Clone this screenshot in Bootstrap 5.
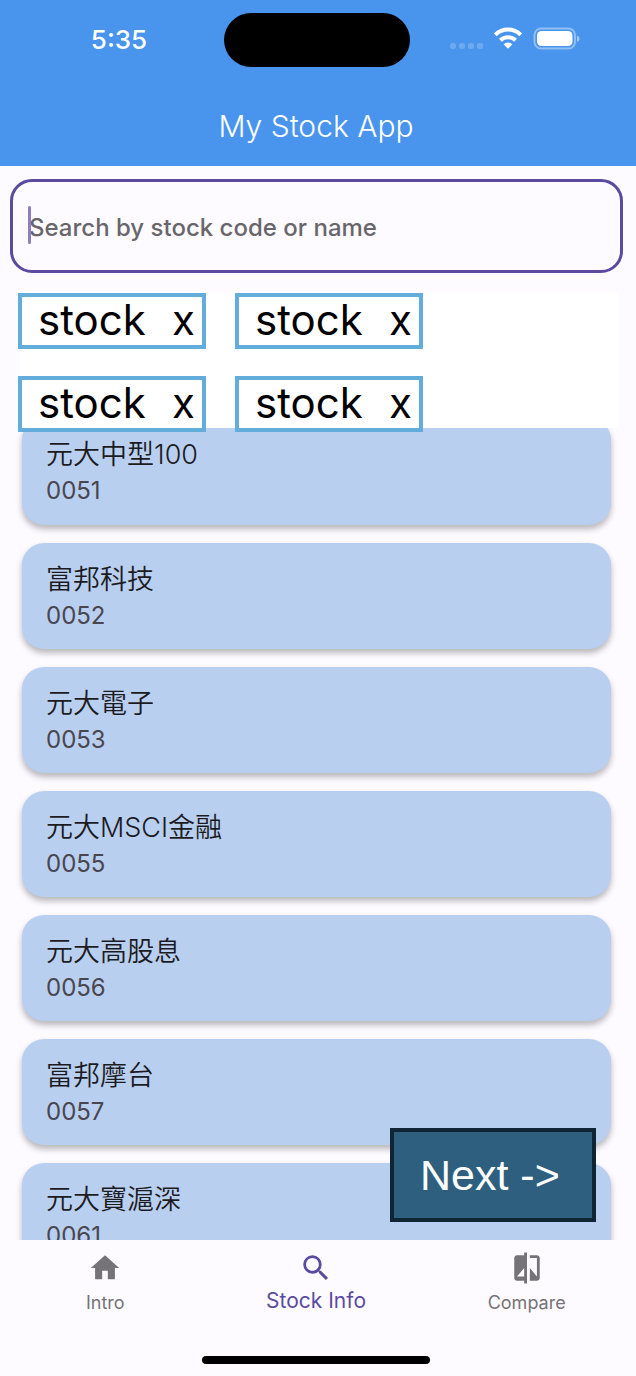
<!DOCTYPE html>
<html lang="zh-Hant">
<head>
<meta charset="utf-8">
<meta name="viewport" content="width=device-width, initial-scale=1">
<title>My Stock App</title>
<link href="https://cdn.jsdelivr.net/npm/bootstrap@5.3.0/dist/css/bootstrap.min.css" rel="stylesheet">
<style>
  body { font-family: Inter, "Noto Sans CJK TC", sans-serif; background: #fdfbff; color: #1c1b1f; }
  .app-header { background: #4994ec; padding-top: 13px; height: 166px; }
  .island { width: 186px; height: 54px; background: #000; }
  .clock { font-size: 26px; line-height: 54px; padding-left: 14px; }
  .status-icons { padding-right: 12px; }
  .app-title { font-size: 30px; line-height: 40px; margin-top: 39px; font-weight: 300; }
  .search-area { padding: 13px 13px 19px 10px; }
  .search-input { height: 94px; border: 3px solid #5b4a9f; border-radius: 22px; padding: 2px 16px 0; font-size: 24px; background: transparent; }
  .search-input:focus { border-color: #5b4a9f; box-shadow: none; background: transparent; }
  .search-input::placeholder { color: #68666b; opacity: 1; font-weight: 500; }
  .caret { left: 18px; top: 27px; width: 3px; height: 38px; border-radius: 2px; background: #8b7fc0; }
  .chip-panel { z-index: 2; height: 136px; margin: 0 18px 0 20px; background: #fff; }
  .chip-grid { display: grid; grid-template-columns: 188px 188px; gap: 27px 29px; margin-left: -2px; padding-top: 1px; }
  .chip { height: 56px; border: 4px solid #62addb; background: #fff; color: #000; font-size: 42px; line-height: 46px; padding: 0 7px 0 16px; }
  .list-area { margin-top: -10px; }
  .stock-list { padding: 0 25px 0 22px; gap: 18px; }
  .stock-item { height: 107px; border-radius: 22px; background: #b9cff0; padding: 17px 24px; box-shadow: 0 4px 6px rgba(0,0,0,.28); color: inherit; }
  .stock-list li + li .stock-item { height: 106px; }
  .stock-name { font-size: 27px; line-height: 40px; font-weight: 350; }
  .stock-code { font-size: 24px; line-height: 32px; color: #49464f; font-weight: 400; }
  .next-btn { right: 40px; bottom: 18px; width: 206px; height: 94px; border: 4px solid #0f2533; background: #2e5f7f; color: #fff; font-family: "Liberation Sans", Arial, sans-serif; font-size: 43px; padding: 0 26px; }
  .tab-bar { z-index: 3; background: #fdfbff; height: 136px; padding-right: 4px; }
  .tab-link { color: #757377; font-size: 18px; line-height: 24px; padding-top: 11px; gap: 6px; }
  .tab-link.active { color: #5b4a9f; font-size: 21px; gap: 4px; }
  .home-bar { width: 228px; height: 8px; background: #000; margin-bottom: 12px; }
</style>
</head>
<body>
<div class="d-flex flex-column vh-100 overflow-hidden">
  <header class="app-header text-white flex-shrink-0">
    <div class="d-flex align-items-center pe-1">
      <div class="clock col text-center fw-medium">5:35</div>
      <div class="island rounded-pill"></div>
      <div class="status-icons col d-flex justify-content-center">
        <svg width="130" height="30" viewBox="0 0 130 30" aria-label="Wi-Fi and battery status" role="img">
          <g fill="#fff" fill-opacity=".2"><rect x="0" y="18" width="6" height="6" rx="2"/><rect x="9" y="18" width="6" height="6" rx="2"/><rect x="18" y="18" width="6" height="6" rx="2"/><rect x="27" y="18" width="6" height="6" rx="2"/></g>
          <g fill="none" stroke="#fff" stroke-width="4"><path d="M45.300 9.800A18 18 0 0 1 70.700 9.800"/><path d="M50.400 15.300A11 11 0 0 1 65.600 15.300"/></g>
          <path fill="#fff" d="M53.500 19.200a6.500 6.500 0 0 1 9 0L58 23.800z"/>
          <rect x="84.500" y="3.500" width="40.500" height="20" rx="6.500" fill="none" stroke="#fff" stroke-opacity=".4" stroke-width="2"/>
          <rect x="87" y="6" width="35.500" height="15" rx="4.500" fill="#fff"/>
          <path d="M127 10.500q2.500 1 2.500 3.200t-2.500 3.200z" fill="#fff" fill-opacity=".5"/>
        </svg>
      </div>
    </div>
    <h1 class="app-title text-center mb-0 pe-1">My Stock App</h1>
  </header>

  <main class="flex-grow-1 d-flex flex-column overflow-hidden position-relative">
    <div class="search-area flex-shrink-0">
      <div class="position-relative">
        <input id="search" type="text" class="form-control search-input" placeholder="Search by stock code or name" aria-label="Search by stock code or name">
        <span class="caret position-absolute"></span>
      </div>
    </div>

    <section class="chip-panel position-relative flex-shrink-0">
      <div class="chip-grid">
        <button type="button" class="chip d-flex justify-content-between"><span>stock</span><span>x</span></button>
        <button type="button" class="chip d-flex justify-content-between"><span>stock</span><span>x</span></button>
        <button type="button" class="chip d-flex justify-content-between"><span>stock</span><span>x</span></button>
        <button type="button" class="chip d-flex justify-content-between"><span>stock</span><span>x</span></button>
      </div>
    </section>

    <div class="list-area flex-grow-1 overflow-hidden">
      <ul class="stock-list list-unstyled d-flex flex-column mb-0">
        <li><a href="#" class="stock-item d-block text-decoration-none"><div class="stock-name">元大中型100</div><div class="stock-code">0051</div></a></li>
        <li><a href="#" class="stock-item d-block text-decoration-none"><div class="stock-name">富邦科技</div><div class="stock-code">0052</div></a></li>
        <li><a href="#" class="stock-item d-block text-decoration-none"><div class="stock-name">元大電子</div><div class="stock-code">0053</div></a></li>
        <li><a href="#" class="stock-item d-block text-decoration-none"><div class="stock-name">元大MSCI金融</div><div class="stock-code">0055</div></a></li>
        <li><a href="#" class="stock-item d-block text-decoration-none"><div class="stock-name">元大高股息</div><div class="stock-code">0056</div></a></li>
        <li><a href="#" class="stock-item d-block text-decoration-none"><div class="stock-name">富邦摩台</div><div class="stock-code">0057</div></a></li>
        <li><a href="#" class="stock-item d-block text-decoration-none"><div class="stock-name">元大寶滬深</div><div class="stock-code">0061</div></a></li>
      </ul>
    </div>
    <button type="button" class="next-btn position-absolute text-start text-nowrap">Next -&gt;</button>
  </main>

  <nav class="tab-bar flex-shrink-0 d-flex flex-column justify-content-between">
    <div class="d-flex text-center">
      <a href="#" class="tab-link col d-flex flex-column align-items-center text-decoration-none">
        <svg width="34" height="34" viewBox="0 0 24 24" fill="currentColor" aria-hidden="true"><path d="M10 20v-6h4v6h5v-8h3L12 3 2 12h3v8z"/></svg>
        <span>Intro</span>
      </a>
      <a href="#" class="tab-link active col d-flex flex-column align-items-center text-decoration-none" aria-current="page">
        <svg width="34" height="34" viewBox="0 0 24 24" fill="currentColor" aria-hidden="true"><path d="M15.500 14h-.79l-.28-.27A6.471 6.471 0 0 0 16 9.500 6.500 6.500 0 1 0 9.500 16c1.610 0 3.090-.59 4.230-1.570l.27.28v.79l5 4.990L20.490 19l-4.990-5zm-6 0C7.010 14 5 11.990 5 9.500S7.010 5 9.500 5 14 7.010 14 9.500 11.990 14 9.500 14z"/></svg>
        <span>Stock Info</span>
      </a>
      <a href="#" class="tab-link col d-flex flex-column align-items-center text-decoration-none">
        <svg width="34" height="34" viewBox="0 0 24 24" fill="currentColor" aria-hidden="true"><path d="M10 3H5c-1.100 0-2 .9-2 2v14c0 1.100.9 2 2 2h5v2h2V1h-2v2zm0 15H5l5-6v6zm9-15h-5v2h5v13l-5-6v9h5c1.100 0 2-.9 2-2V5c0-1.100-.9-2-2-2z"/></svg>
        <span>Compare</span>
      </a>
    </div>
    <div class="home-bar rounded-pill mx-auto"></div>
  </nav>
</div>
<script src="https://cdn.jsdelivr.net/npm/bootstrap@5.3.0/dist/js/bootstrap.bundle.min.js"></script>
</body>
</html>
